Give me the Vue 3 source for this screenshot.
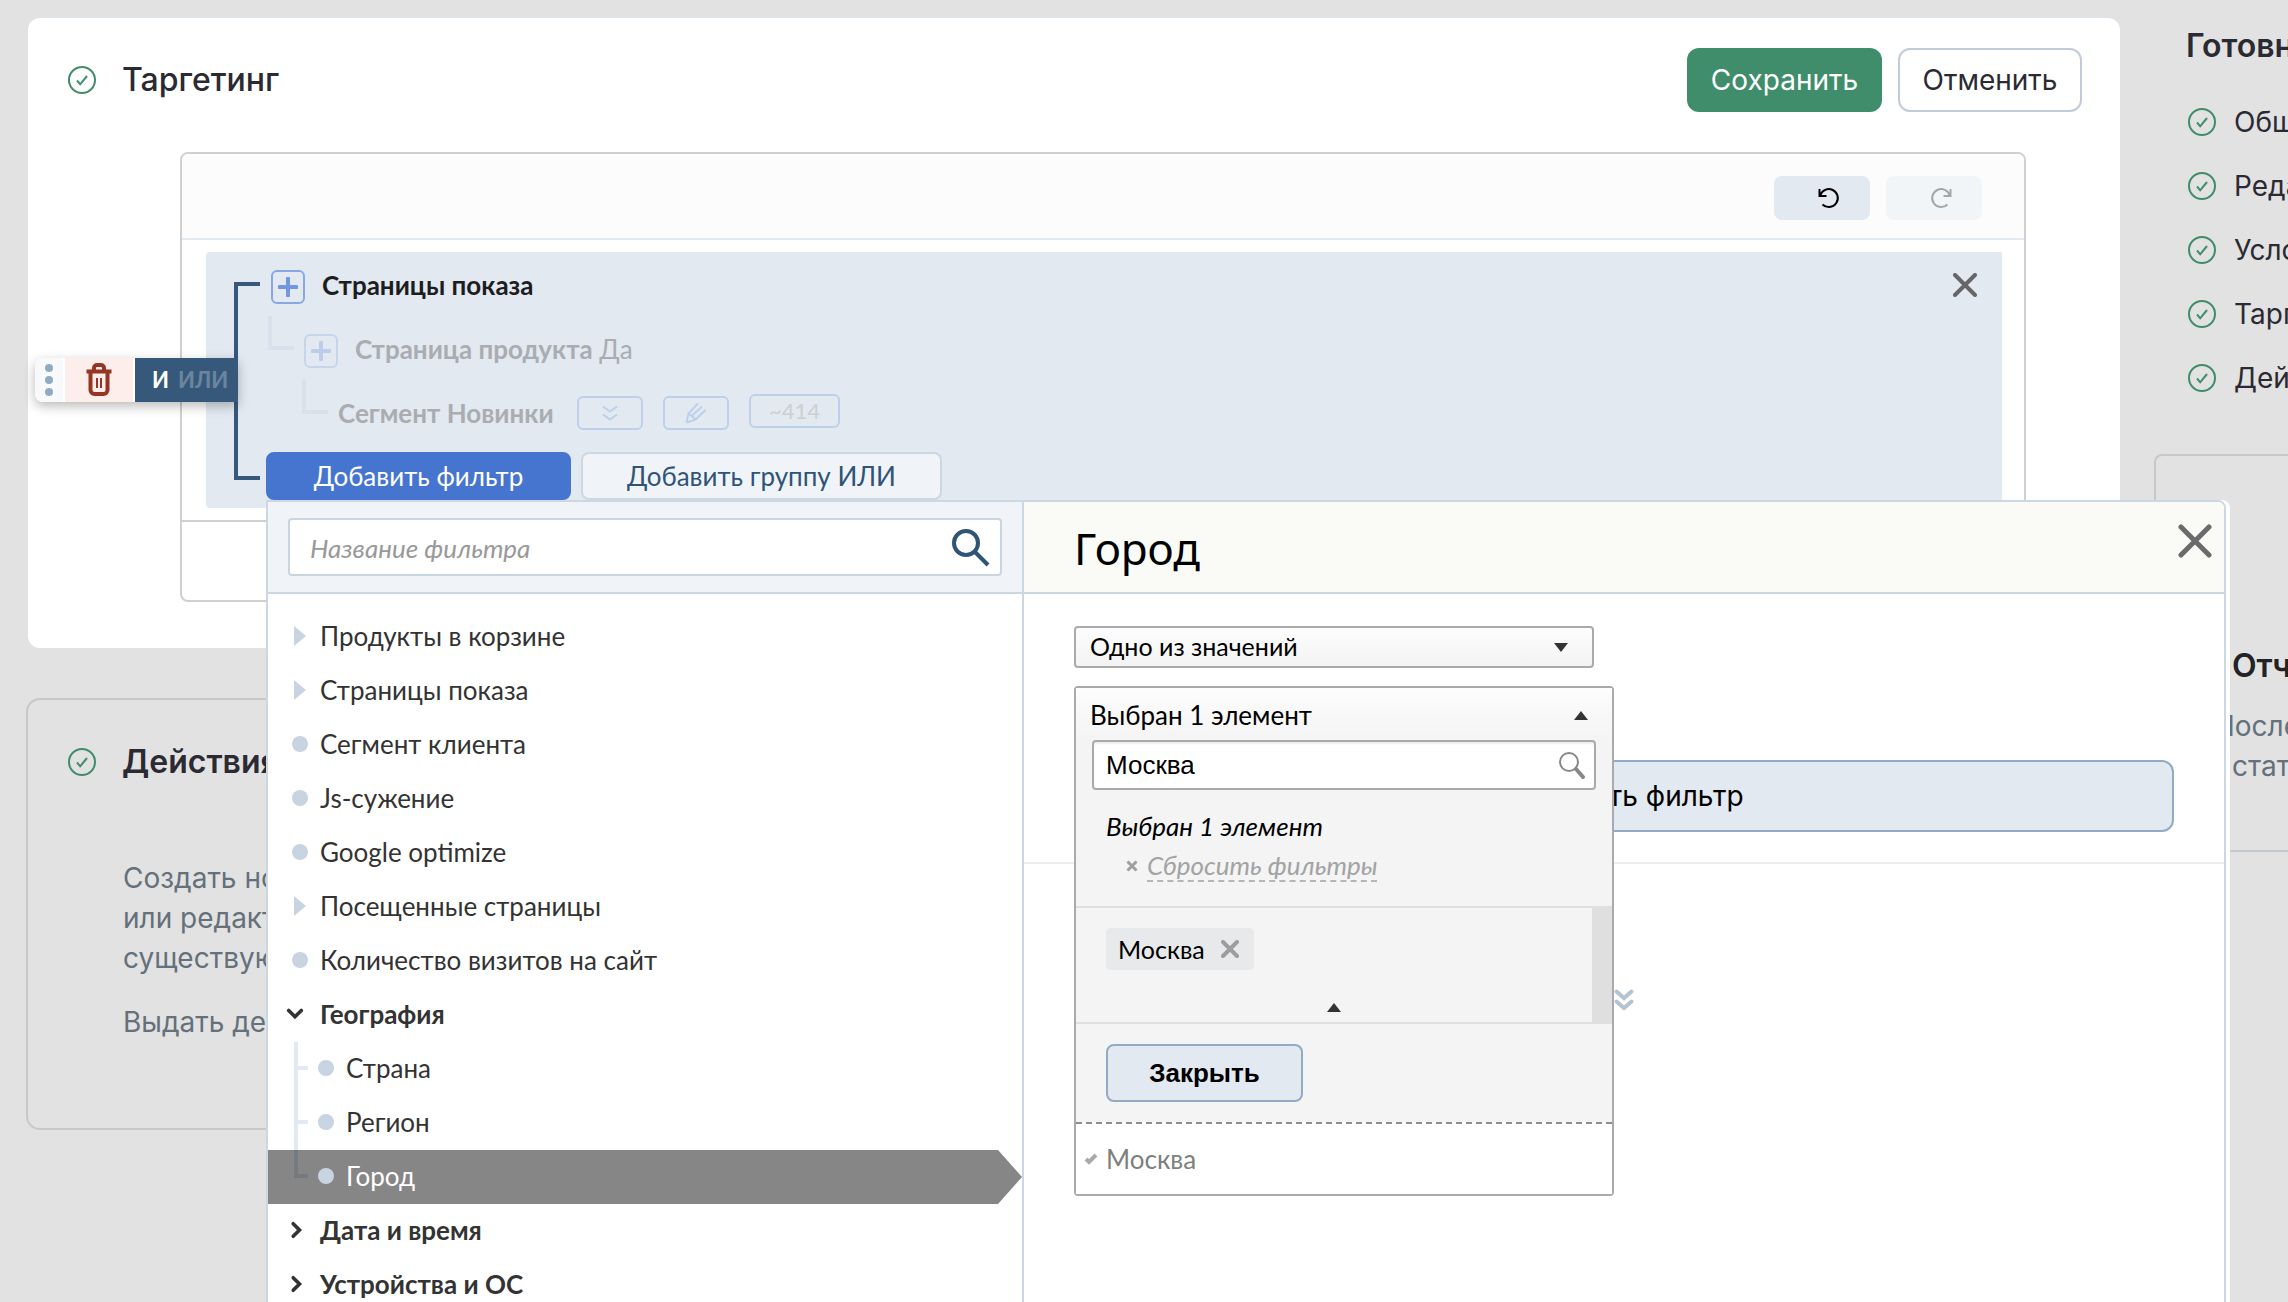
<script setup>
import { ref } from 'vue'

const readiness = ['Общие настройки', 'Редактор формы', 'Условия показа', 'Таргетинг', 'Действия']

const filters = [
  { name: 'Продукты в корзине', kind: 'branch' },
  { name: 'Страницы показа', kind: 'branch' },
  { name: 'Сегмент клиента', kind: 'leaf' },
  { name: 'Js-сужение', kind: 'leaf' },
  { name: 'Google optimize', kind: 'leaf' },
  { name: 'Посещенные страницы', kind: 'branch' },
  { name: 'Количество визитов на сайт', kind: 'leaf' },
  { name: 'География', kind: 'open' },
  { name: 'Страна', kind: 'child' },
  { name: 'Регион', kind: 'child' },
  { name: 'Город', kind: 'child', last: true, active: true },
  { name: 'Дата и время', kind: 'closed' },
  { name: 'Устройства и ОС', kind: 'closed' },
]

const filterName = ref('')
const city = ref('Москва')
</script>

<template>
  <div class="page">
    <main class="content">
      <section class="card">
        <header class="card-head">
          <svg class="ok" viewBox="0 0 28 28"><circle cx="14" cy="14" r="13" /><path d="M9 14.5l3.2 3.8L19 10" /></svg>
          <h2 class="title">Таргетинг</h2>
          <button class="btn save" type="button">Сохранить</button>
          <button class="btn cancel" type="button">Отменить</button>
        </header>

        <div class="editor">
          <div class="toolbar">
            <button class="tool" type="button" aria-label="Назад">
              <svg viewBox="0 0 22 22"><path d="M1.5 2v7h7M2.2 8.5A9 9 0 1 1 4.5 17.5" /></svg>
            </button>
            <button class="tool off" type="button" aria-label="Вперёд" disabled>
              <svg viewBox="0 0 22 22"><path d="M20.500 2v7h-7M19.800 8.500A9 9 0 1 0 17.500 17.500" /></svg>
            </button>
          </div>

          <div class="canvas">
            <div class="group">
              <div class="bracket"></div>
              <div class="handle">
                <span class="grip"><i></i><i></i><i></i></span>
                <button class="trash" type="button" aria-label="Удалить">
                  <svg viewBox="0 0 28 34"><path d="M1.500 8.500h25M9 7V5a3 3 0 0 1 3-3h4a3 3 0 0 1 3 3v2M5.500 10v17a4 4 0 0 0 4 4h9a4 4 0 0 0 4-4V10" stroke-width="4" /><path d="M12 15v10M16 15v10" stroke-width="2" /></svg>
                </button>
                <span class="logic"><b>И</b><b class="dim">ИЛИ</b></span>
              </div>
              <button class="dismiss" type="button" aria-label="Убрать группу">
                <svg viewBox="0 0 24 24"><path d="M2 2l20 20M22 2L2 22" /></svg>
              </button>

              <div class="row first">
                <button class="plus" type="button" aria-label="Добавить"><svg viewBox="0 0 20 20"><path d="M10 1.500v17M1.500 10h17" /></svg></button>
                <strong class="label">Страницы показа</strong>
              </div>
              <div class="row second">
                <span class="elbow"></span>
                <button class="plus pale" type="button" aria-label="Добавить"><svg viewBox="0 0 20 20"><path d="M10 1.500v17M1.500 10h17" /></svg></button>
                <span class="label faded"><strong>Страница продукта</strong> Да</span>
              </div>
              <div class="row third">
                <span class="elbow"></span>
                <strong class="label faded segment">Сегмент Новинки</strong>
                <div class="minis">
                  <button class="mini" type="button" aria-label="Развернуть"><svg viewBox="0 0 22 22"><path d="M4 4.500l7 5 7-5M4 12.500l7 5 7-5" /></svg></button>
                  <button class="mini" type="button" aria-label="Править"><svg viewBox="0 0 22 22"><path d="M1.500 20.500l2-9L13 1.500M1.500 20.500l9-3L20.500 8M6.500 14L17 4.500M3.500 11.500l3 2.500 1 .5 3 3" /></svg></button>
                  <span class="mini count">~414</span>
                </div>
              </div>

              <div class="adders">
                <button class="add main" type="button">Добавить фильтр</button>
                <button class="add" type="button">Добавить группу ИЛИ</button>

                <div class="popup">
                  <aside class="picker">
                    <div class="picker-head">
                      <label class="search">
                        <input v-model="filterName" type="text" placeholder="Название фильтра" aria-label="Название фильтра" />
                        <svg viewBox="0 0 38 38"><circle cx="14" cy="14" r="12" /><path d="M23 23l13 13" /></svg>
                      </label>
                    </div>
                    <ul class="list">
                      <li v-for="f in filters" :key="f.name + f.kind" :class="[f.kind, { last: f.last, active: f.active }]">
                        <span class="mark">
                          <svg v-if="f.kind === 'open'" class="chev" viewBox="0 0 20 20"><path d="M3 6l7 7 7-7" /></svg>
                          <svg v-else-if="f.kind === 'closed'" class="chev" viewBox="0 0 20 20"><path d="M8 3l7 7-7 7" /></svg>
                          <i v-else></i>
                        </span>
                        <span>{{ f.name }}</span>
                      </li>
                    </ul>
                  </aside>

                  <div class="detail">
                    <div class="detail-head">
                      <h3>Город</h3>
                      <button class="close" type="button" aria-label="Закрыть окно"><svg viewBox="0 0 34 34"><path d="M3 3l28 28M31 3L3 31" /></svg></button>
                    </div>
                    <div class="form">
                      <div class="mode">
                        <select aria-label="Условие"><option>Одно из значений</option></select>
                        <svg class="tri" viewBox="0 0 14 9"><path d="M0 0h14L7 9z" /></svg>
                      </div>
                      <div class="anchor">
                        <div class="drop">
                          <button class="drop-head" type="button">
                            <span>Выбран 1 элемент</span>
                            <svg class="tri" viewBox="0 0 14 9"><path d="M0 9h14L7 0z" /></svg>
                          </button>
                          <label class="find">
                            <input v-model="city" type="text" aria-label="Поиск города" />
                            <svg viewBox="0 0 28 28"><circle cx="11" cy="11" r="9" stroke-width="2" /><path d="M18 18l7 8" stroke-width="4" /></svg>
                          </label>
                          <p class="chosen">Выбран 1 элемент</p>
                          <p class="reset">
                            <svg viewBox="0 0 12 12"><path d="M1.500 1.500l9 9M10.500 1.500l-9 9" /></svg>
                            <a href="#">Сбросить фильтры</a>
                          </p>
                          <div class="chips">
                            <div class="chips-body">
                              <span class="chip">Москва<svg viewBox="0 0 18 18"><path d="M2 2l14 14M16 2L2 16" /></svg></span>
                              <svg class="tri fold" viewBox="0 0 14 9"><path d="M0 9h14L7 0z" /></svg>
                            </div>
                            <div class="scroll"></div>
                          </div>
                          <div class="actions"><button class="shut" type="button">Закрыть</button></div>
                          <div class="option">
                            <svg viewBox="0 0 14 12"><path d="M2 6l3 3 7-7" /></svg>Москва
                          </div>
                        </div>
                      </div>
                      <button class="wide" type="button">Добавить фильтр</button>
                    </div>
                    <div class="below">
                      <svg viewBox="0 0 20 22"><path d="M2.500 2.500L10 9l7.500-6.500M2.500 12.500L10 19l7.500-6.500" /></svg>
                    </div>
                  </div>
                </div>
              </div>
            </div>
          </div>
          <div class="editor-foot"></div>
        </div>
      </section>

      <section class="card muted">
        <header class="card-head">
          <svg class="ok" viewBox="0 0 28 28"><circle cx="14" cy="14" r="13" /><path d="M9 14.5l3.2 3.8L19 10" /></svg>
          <h2 class="title strong">Действия</h2>
        </header>
        <div class="about">
          <p>Создать новое<br />или редактировать<br />существующее</p>
          <p>Выдать действие</p>
        </div>
      </section>
    </main>

    <aside class="side">
      <h2 class="title strong">Готовность</h2>
      <ul class="ready">
        <li v-for="r in readiness" :key="r">
          <svg class="ok" viewBox="0 0 28 28"><circle cx="14" cy="14" r="13" /><path d="M9 14.5l3.2 3.8L19 10" /></svg>{{ r }}
        </li>
      </ul>
      <div class="report">
        <h2 class="title strong">Отчёт</h2>
        <p class="after">После запуска</p>
        <p>статистика</p>
      </div>
    </aside>
  </div>
</template>

<style>
body {
  margin: 0;
  background: #e2e2e2;
}
</style>

<style scoped>
.page,
.page * {
  box-sizing: border-box;
}
.page {
  display: grid;
  grid-template-columns: minmax(0, 1fr) 134px;
  gap: 34px;
  height: 100vh;
  overflow: hidden;
  padding: 18px 0 0 28px;
  background: #e2e2e2;
  font: 28px/40px Inter, sans-serif;
  color: #2b2a33;
}
button,
input,
select {
  font: inherit;
  color: inherit;
  margin: 0;
  padding: 0;
}
button {
  border: 0;
  background: none;
  display: flex;
  align-items: center;
  justify-content: center;
  white-space: nowrap;
}
svg {
  display: block;
  flex: none;
  fill: none;
  stroke: currentColor;
  stroke-width: 2;
}
p,
ul,
h2,
h3 {
  margin: 0;
  padding: 0;
  list-style: none;
}
i {
  display: block;
}
.ok {
  width: 28px;
  height: 28px;
  color: #3f8d6b;
}
.title {
  font-size: 32px;
  font-weight: 500;
  white-space: nowrap;
}
.strong {
  font-weight: 600;
}
.card {
  background: #fff;
  border-radius: 12px;
  padding: 30px 0 46px;
  box-shadow: 0 0 0 1px #dbe3ea;
}
.card-head {
  display: flex;
  align-items: center;
  height: 64px;
  padding: 0 38px 0 40px;
}
.card-head .title {
  flex: 1;
  margin-left: 26px;
}
.btn {
  height: 64px;
  border-radius: 12px;
}
.save {
  width: 195px;
  background: #408d6b;
  color: #fff;
}
.cancel {
  width: 184px;
  margin-left: 16px;
  border: 2px solid #c0ccd7;
  background: #fff;
}
.editor {
  margin: 40px 94px 0 152px;
  border: 2px solid #d0d0d0;
  border-radius: 8px;
}
.toolbar {
  display: flex;
  justify-content: flex-end;
  align-items: center;
  gap: 16px;
  height: 86px;
  padding: 4px 42px 0 0;
  border-bottom: 2px solid #e2e9f0;
  border-radius: 6px 6px 0 0;
  background: #fcfcfc;
}
.tool {
  width: 96px;
  height: 44px;
  padding-left: 14px;
  border-radius: 8px;
  background: #e2e9f0;
  color: #000;
}
.tool svg {
  width: 22px;
  height: 22px;
}
.tool.off {
  background: #f1f5f7;
  color: #a4a6a8;
}
.canvas {
  padding: 12px 22px 12px 24px;
}
.editor-foot {
  height: 80px;
  border-top: 2px solid #d0d0d0;
}
.group {
  position: relative;
  padding: 3px 0 8px 60px;
  border-radius: 4px 0 0 4px;
  background: #e2e9f0;
  font-family: Lato, 'Noto Sans', sans-serif;
  font-size: 26px;
}
.bracket {
  position: absolute;
  left: 28px;
  top: 30px;
  width: 26px;
  height: 198px;
  border: 4px solid #36597b;
  border-right: 0;
}
.handle {
  position: absolute;
  left: -171px;
  top: 106px;
  display: flex;
  width: 203px;
  height: 44px;
  border-radius: 8px 0 0 8px;
  background: #fff;
  box-shadow: 0 4px 12px rgba(0, 0, 0, 0.28);
}
.grip {
  display: flex;
  flex-direction: column;
  align-items: center;
  justify-content: center;
  gap: 4px;
  width: 28px;
  border-radius: 8px 0 0 8px;
  background: #f7f9fb;
}
.grip i {
  width: 8px;
  height: 8px;
  border-radius: 50%;
  background: #91abc2;
}
.trash {
  width: 68px;
  margin: 0 2px;
  background: #fdeeec;
  color: #963524;
}
.trash svg {
  width: 28px;
  height: 34px;
}
.logic {
  flex: 1;
  display: flex;
  align-items: center;
  gap: 9px;
  padding-left: 17px;
  background: #36597b;
  color: #fff;
  font-size: 22px;
}
.dim {
  color: #6b859f;
}
.dismiss {
  position: absolute;
  top: 21px;
  right: 25px;
  color: #666;
}
.dismiss svg {
  width: 24px;
  height: 24px;
  stroke-width: 4;
  stroke-linecap: round;
}
.row {
  display: flex;
  align-items: center;
  height: 64px;
  color: #1d1d1f;
  white-space: nowrap;
}
.label {
  padding-bottom: 4px;
}
.first {
  padding-left: 5px;
}
.second {
  padding-left: 2px;
}
.third {
  padding-left: 36px;
}
.plus {
  width: 34px;
  height: 34px;
  margin-right: 17px;
  border: 2px solid #87a8e2;
  border-radius: 6px;
  color: #7198df;
}
.plus svg {
  width: 20px;
  height: 20px;
  stroke-width: 4;
  stroke-linecap: round;
}
.pale {
  border-color: #c7d5ec;
  color: #bccdea;
}
.elbow {
  align-self: flex-start;
  width: 26px;
  height: 34px;
  margin: -3px 10px 0 0;
  border: solid #d8e1ec;
  border-width: 0 0 4px 4px;
}
.faded {
  color: #a9adb1;
}
.segment {
  min-width: 239px;
}
.minis {
  display: flex;
  align-items: flex-end;
  gap: 20px;
  padding-bottom: 6px;
}
.mini {
  display: flex;
  align-items: center;
  justify-content: center;
  width: 66px;
  height: 34px;
  border: 2px solid #bdd0eb;
  border-radius: 6px;
  color: #bdd0eb;
}
.mini svg {
  width: 22px;
  height: 22px;
}
.count {
  width: 91px;
  margin-bottom: 2px;
  color: #cbcfd3;
  font-size: 22px;
}
.adders {
  position: relative;
  display: flex;
  gap: 10px;
  margin-top: 5px;
}
.add {
  width: 361px;
  height: 48px;
  border: 2px solid #cbd7e1;
  border-radius: 8px;
  background: #f0f4f8;
  color: #2f5478;
}
.add.main {
  width: 305px;
  border-color: #4675d0;
  background: #4675d0;
  color: #fff;
}
.popup {
  position: absolute;
  z-index: 10;
  top: 100%;
  left: 0;
  display: flex;
  width: calc(100vw - 328px);
  border: 2px solid #cbd7e2;
  border-radius: 0 8px 0 0;
  background: #fff;
  box-shadow: 4px 0 0 #fff;
}
.picker {
  flex: none;
  width: 756px;
  border-right: 2px solid #cbd7e2;
}
.picker-head {
  height: 92px;
  padding: 16px 20px;
  border-bottom: 2px solid #cbd7e2;
  background: #f0f4f8;
}
.search {
  display: flex;
  align-items: center;
  height: 58px;
  padding: 2px 10px 0 20px;
  border: 2px solid #c9d6e2;
  border-radius: 4px;
  background: #fff;
}
.search input,
.find input {
  flex: 1;
  min-width: 0;
  border: 0;
  outline: 0;
  background: none;
}
.search input::placeholder {
  color: #999;
  font-style: italic;
  opacity: 1;
}
.search svg {
  width: 38px;
  height: 38px;
  color: #2f5478;
  stroke-width: 4;
}
.list {
  padding: 16px 0 24px;
  color: #333;
}
.list li {
  position: relative;
  display: flex;
  align-items: center;
  height: 54px;
  padding: 0 0 2px 24px;
  white-space: nowrap;
}
.list .child {
  padding-left: 50px;
}
.mark {
  display: flex;
  width: 16px;
  margin-right: 12px;
}
.leaf i,
.child i {
  width: 16px;
  height: 16px;
  border-radius: 50%;
  background: #c8d4e1;
}
.branch i {
  margin-left: 2px;
  border: 10px solid transparent;
  border-left: 12px solid #c8d4e1;
  border-right: 0;
}
.list .open,
.list .closed {
  font-weight: 700;
}
.chev {
  width: 18px;
  height: 18px;
  margin-left: -6px;
  stroke-width: 4;
  stroke-linecap: round;
}
.child::before {
  content: '';
  position: absolute;
  left: 26px;
  top: 0;
  width: 4px;
  height: 54px;
  background: #e2e9f0;
}
.child::after {
  content: '';
  position: absolute;
  left: 30px;
  top: 24px;
  width: 10px;
  height: 4px;
  background: #e2e9f0;
}
.list .active {
  background: #868686;
  color: #fff;
  clip-path: polygon(0 0, calc(100% - 24px) 0, 100% 50%, calc(100% - 24px) 100%, 0 100%);
}
.last::before {
  height: 28px;
}
.active::before,
.active::after {
  background: #767a7e;
}
.detail {
  flex: 1;
  min-width: 0;
}
.detail-head {
  display: flex;
  justify-content: space-between;
  height: 92px;
  padding: 20px 10px 0 50px;
  border-bottom: 2px solid #cbd7e2;
  border-radius: 0 6px 0 0;
  background: #fafbf7;
}
.detail-head h3 {
  font: 400 44px/52px 'Noto Sans', sans-serif;
  color: #000;
}
.close {
  width: 38px;
  height: 38px;
  color: #6b6b6b;
}
.close svg {
  width: 34px;
  height: 34px;
  stroke-width: 5;
  stroke-linecap: round;
}
.form {
  padding: 32px 50px 30px;
  border-bottom: 2px solid #ededed;
  color: #000;
}
.mode {
  position: relative;
  width: 520px;
  height: 42px;
}
.mode select {
  appearance: none;
  width: 100%;
  height: 100%;
  padding: 0 14px 2px;
  border: 2px solid #aaaaae;
  border-radius: 4px;
  background: linear-gradient(#fdfdfd, #f3f3f3);
  font-size: 25px;
  line-height: 34px;
}
.tri {
  width: 14px;
  height: 9px;
  fill: #333;
  stroke: none;
}
.mode .tri {
  position: absolute;
  right: 26px;
  top: 17px;
}
.anchor {
  position: relative;
  height: 92px;
}
.drop {
  position: absolute;
  top: 18px;
  left: 0;
  width: 540px;
  border: 2px solid #aaaaae;
  border-radius: 4px;
  background: #f4f4f4;
}
.drop-head {
  justify-content: space-between;
  width: 100%;
  height: 52px;
  padding: 2px 24px 0 14px;
  background: linear-gradient(#fdfdfd, #f4f4f4);
}
.find {
  display: flex;
  align-items: center;
  height: 50px;
  margin: 0 16px 16px;
  padding: 0 8px 0 12px;
  border: 2px solid #aaaaae;
  border-radius: 4px;
  background: #fff;
  box-shadow: inset 0 2px 2px #eee;
  font: 26px/40px 'Liberation Sans', sans-serif;
}
.find svg {
  width: 28px;
  height: 28px;
  color: #888;
  stroke-linecap: round;
}
.chosen,
.reset {
  padding-left: 30px;
  font-style: italic;
}
.reset {
  display: flex;
  align-items: center;
  gap: 9px;
  height: 40px;
  margin-bottom: 20px;
  padding-left: 50px;
  color: #9f9f9f;
}
.reset svg {
  width: 12px;
  height: 12px;
  stroke-width: 3;
}
.reset a {
  color: #a3a3a3;
  line-height: 30px;
  text-decoration: none;
  border-bottom: 2px dashed #b5b5b5;
}
.chips {
  display: flex;
  height: 118px;
  border: solid #dfdfdf;
  border-width: 2px 0;
}
.chips-body {
  flex: 1;
  display: flex;
  flex-direction: column;
  align-items: flex-start;
  justify-content: space-between;
  padding: 20px 0 10px 30px;
}
.chip {
  display: flex;
  align-items: center;
  gap: 16px;
  height: 42px;
  padding: 0 15px 0 12px;
  border-radius: 4px;
  background: #e8e9eb;
  font-size: 25px;
}
.chip svg {
  width: 18px;
  height: 18px;
  color: #9d9d9d;
  stroke-width: 4;
  stroke-linecap: round;
}
.fold {
  align-self: center;
  margin-right: 30px;
}
.scroll {
  width: 20px;
  background: #dfdfdf;
}
.actions {
  padding: 20px 30px;
}
.shut {
  width: 197px;
  height: 58px;
  border: 2px solid #91abc4;
  border-radius: 8px;
  background: #e2e9f0;
  font: bold 26px 'Liberation Sans', sans-serif;
}
.option {
  display: flex;
  align-items: center;
  gap: 8px;
  height: 72px;
  padding-left: 8px;
  border-top: 2px dashed #8e8e8e;
  background: #fff;
  color: #7f7f7f;
}
.option svg {
  width: 14px;
  height: 12px;
  stroke: #aaa;
  stroke-width: 4;
}
.wide {
  width: 100%;
  height: 72px;
  border: 2px solid #91abc4;
  border-radius: 12px;
  background: #e2e9f0;
  font-family: Inter, sans-serif;
  font-size: 28px;
}
.below {
  padding: 125px 0 0 590px;
}
.below svg {
  width: 20px;
  height: 22px;
  color: #b6c3d1;
  stroke-width: 4;
  stroke-linecap: round;
}
.muted {
  height: 428px;
  margin-top: 52px;
  background: none;
  box-shadow: 0 0 0 2px #c4c9cd;
}
.about {
  padding: 64px 95px;
  color: #64707a;
  white-space: nowrap;
}
.about p + p {
  margin-top: 24px;
}
.side {
  white-space: nowrap;
}
.side > .title {
  margin: 8px 0 0 32px;
}
.ready {
  padding: 24px 0 0 34px;
}
.ready li {
  display: flex;
  align-items: center;
  gap: 18px;
  height: 64px;
}
.report {
  width: 200%;
  height: 398px;
  margin-top: 44px;
  padding: 190px 0 0 76px;
  border: 2px solid #c4c9cd;
  border-radius: 8px;
  color: #64707a;
}
.report .title {
  margin-bottom: 20px;
  color: #232326;
}
.after {
  margin-left: -18px;
}
</style>
